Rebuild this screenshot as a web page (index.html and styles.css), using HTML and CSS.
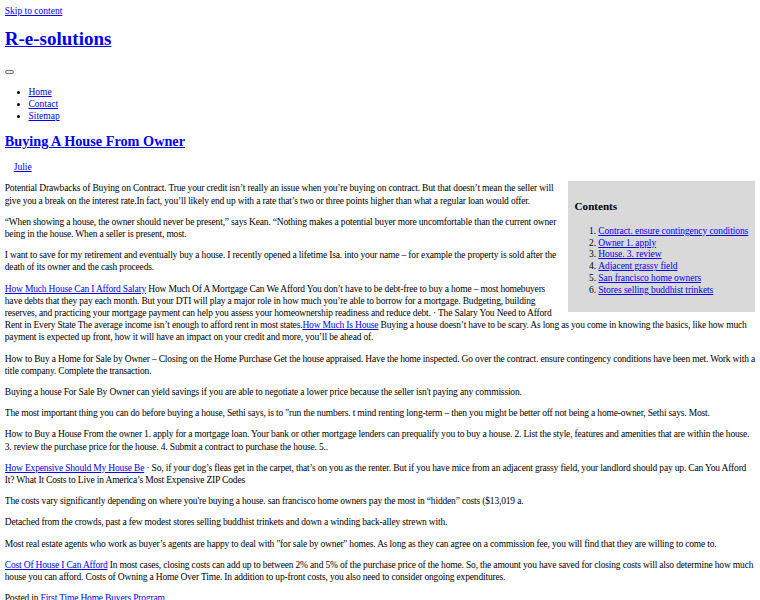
FILE: index.html
```html
<!DOCTYPE html>
<html lang="en">
<head>
<meta charset="utf-8">
<title>Buying A House From Owner – R-e-solutions</title>
<link rel="stylesheet" href="styles.css">
</head>
<body>
<a class="skip-link" href="#content">Skip to content</a>
<header class="site-header">
  <h1 class="site-title"><a href="#">R-e-solutions</a></h1>
  <nav class="main-nav">
    <div class="toggle-line"><button class="menu-toggle" type="button"></button></div>
    <ul class="menu">
      <li><a href="#">Home</a></li>
      <li><a href="#">Contact</a></li>
      <li><a href="#">Sitemap</a></li>
    </ul>
  </nav>
</header>
<main id="content" class="site-main">
  <article class="post">
    <h2 class="entry-title"><a href="#">Buying A House From Owner</a></h2>
    <p class="byline"><a href="#">Julie</a></p>
    <div class="entry-content">
      <div class="toc">
        <p class="toc-title">Contents</p>
        <ol class="toc-list">
          <li><a href="#">Contract. ensure contingency conditions</a></li>
          <li><a href="#">Owner 1. apply</a></li>
          <li><a href="#">House. 3. review</a></li>
          <li><a href="#">Adjacent grassy field</a></li>
          <li><a href="#">San francisco home owners</a></li>
          <li><a href="#">Stores selling buddhist trinkets</a></li>
        </ol>
      </div>
      <p>Potential Drawbacks of Buying on Contract. True your credit isn’t really an issue when you’re buying on contract. But that doesn’t mean the seller will give you a break on the interest rate.In fact, you’ll likely end up with a rate that’s two or three points higher than what a regular loan would offer.</p>
      <p>“When showing a house, the owner should never be present,” says Kean. “Nothing makes a potential buyer more uncomfortable than the current owner being in the house. When a seller is present, most.</p>
      <p>I want to save for my retirement and eventually buy a house. I recently opened a lifetime Isa. into your name – for example the property is sold after the death of its owner and the cash proceeds.</p>
      <p><a href="#">How Much House Can I Afford Salary</a> How Much Of A Mortgage Can We Afford You don’t have to be debt-free to buy a home – most homebuyers have debts that they pay each month. But your DTI will play a major role in how much you’re able to borrow for a mortgage. Budgeting, building reserves, and practicing your mortgage payment can help you assess your homeownership readiness and reduce debt. · The Salary You Need to Afford Rent in Every State The average income isn’t enough to afford rent in most states.<a href="#">How Much Is House</a> Buying a house doesn’t have to be scary. As long as you come in knowing the basics, like how much payment is expected up front, how it will have an impact on your credit and more, you’ll be ahead of.</p>
      <p>How to Buy a Home for Sale by Owner – Closing on the Home Purchase Get the house appraised. Have the home inspected. Go over the contract. ensure contingency conditions have been met. Work with a title company. Complete the transaction.</p>
      <p>Buying a house For Sale By Owner can yield savings if you are able to negotiate a lower price because the seller isn't paying any commission.</p>
      <p>The most important thing you can do before buying a house, Sethi says, is to "run the numbers. t mind renting long-term – then you might be better off not being a home-owner, Sethi says. Most.</p>
      <p>How to Buy a House From the owner 1. apply for a mortgage loan. Your bank or other mortgage lenders can prequalify you to buy a house. 2. List the style, features and amenities that are within the house. 3. review the purchase price for the house. 4. Submit a contract to purchase the house. 5..</p>
      <p><a href="#">How Expensive Should My House Be</a> · So, if your dog’s fleas get in the carpet, that’s on you as the renter. But if you have mice from an adjacent grassy field, your landlord should pay up. Can You Afford It? What It Costs to Live in America’s Most Expensive ZIP Codes</p>
      <p>The costs vary significantly depending on where you're buying a house. san francisco home owners pay the most in “hidden” costs ($13,019 a.</p>
      <p>Detached from the crowds, past a few modest stores selling buddhist trinkets and down a winding back-alley strewn with.</p>
      <p>Most real estate agents who work as buyer’s agents are happy to deal with "for sale by owner" homes. As long as they can agree on a commission fee, you will find that they are willing to come to.</p>
      <p><a href="#">Cost Of House I Can Afford</a> In most cases, closing costs can add up to between 2% and 5% of the purchase price of the home. So, the amount you have saved for closing costs will also determine how much house you can afford. Costs of Owning a Home Over Time. In addition to up-front costs, you also need to consider ongoing expenditures.</p>
    </div>
    <p class="post-meta">Posted in <a href="#">First Time Home Buyers Program</a></p>
  </article>
</main>
</body>
</html>
```
FILE: styles.css
```css
html {
  background: #fff;
}

body {
  margin: 4.75px;
  font-family: "Liberation Serif", "Times New Roman", serif;
  font-size: 9.5px;
  line-height: 12.2px;
  color: #000;
}

a {
  color: #0000ee;
  text-decoration: underline;
}

.skip-link {
  display: block;
}

.site-title {
  font-size: 19px;
  line-height: 22px;
  font-weight: bold;
  margin: 11px 0 14px;
}

.toggle-line {
  line-height: 12.2px;
}

.menu-toggle {
  display: inline-block;
  width: 9.5px;
  height: 3.6px;
  padding: 0;
  margin: 0;
  border: 1px solid #767676;
  border-radius: 2px;
  background: #efefef;
  vertical-align: baseline;
}

.menu {
  margin: 9.5px 0;
  padding-left: 23.75px;
  list-style: disc;
}

.entry-title {
  font-size: 14.25px;
  line-height: 16.4px;
  font-weight: bold;
  margin: 11px 0;
}

.byline {
  margin: 11px 0 9.5px;
  padding-left: 9px;
}

p {
  margin: 9px 0;
}

.entry-content,
.post-meta {
  letter-spacing: -0.17px;
}

.toc {
  float: right;
  margin: -1px 0 2px 5px;
  padding: 0 7px;
  background: #d9d9d9;
}

.toc-title {
  font-size: 11.1px;
  line-height: 14.4px;
  font-weight: bold;
  letter-spacing: 0;
  margin: 18px 0 12px;
}

.toc-list {
  margin: 0 0 15px;
  padding-left: 23.75px;
  line-height: 11.8px;
  letter-spacing: -0.08px;
}

.post-meta {
  margin-top: 9px;
}
```
